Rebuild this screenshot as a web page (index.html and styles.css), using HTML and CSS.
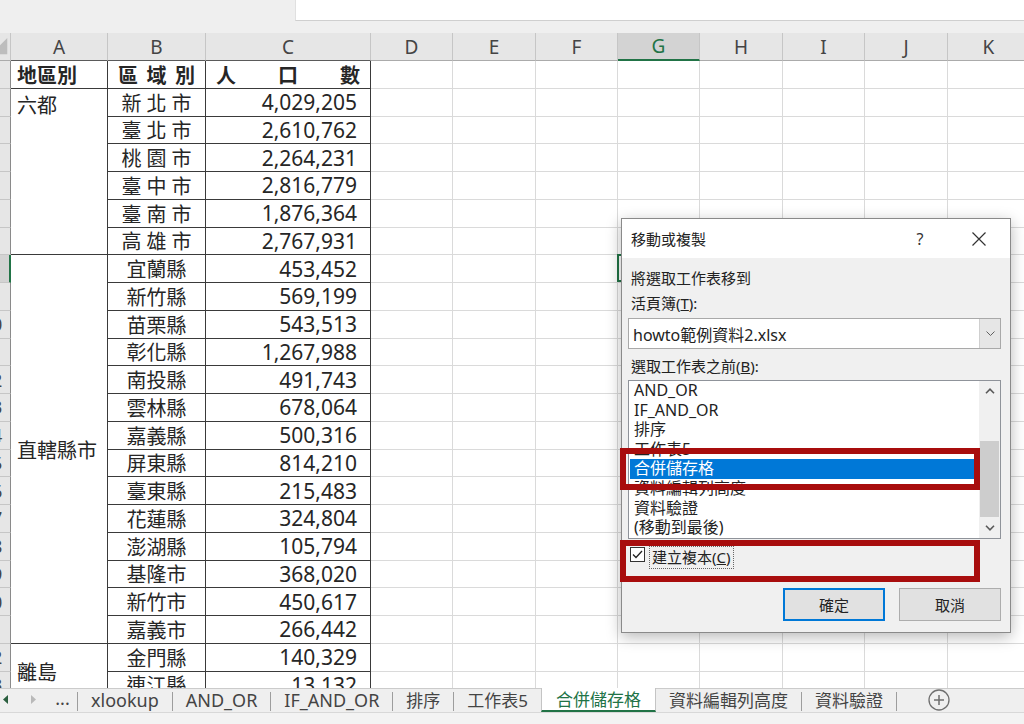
FILE: index.html
```html
<!DOCTYPE html>
<html lang="zh-Hant">
<head>
<meta charset="utf-8">
<title>移動或複製</title>
<link rel="stylesheet" href="styles.css">
</head>
<body>
<div class="app">
  <div class="topbar"><div class="tb-left"></div><div class="tb-right"></div></div>
  <div class="strip"></div>
  <div class="sheet">
    <div class="ch corner"><svg width="11" height="28" viewBox="0 0 11 28"><polygon points="8,4 8,22 -10,22" fill="#bdbdbd"/></svg></div>
    <div class="ch dk">A</div><div class="ch dk">B</div><div class="ch dk">C</div>
    <div class="ch">D</div><div class="ch">E</div><div class="ch">F</div><div class="ch sel">G</div>
    <div class="ch">H</div><div class="ch">I</div><div class="ch">J</div><div class="ch">K</div>

    <div class="rh"><span>1</span></div>
    <div class="t b left">地區別</div>
    <div class="t b dist"><span>區</span><span>域</span><span>別</span></div>
    <div class="t b dist"><span>人</span><span>口</span><span>數</span></div>
    <div></div><div></div><div></div><div></div><div></div><div></div><div></div><div></div>

    <div class="rh"><span>2</span></div>
    <div class="t left top span6">六都</div>
    <div class="t c sp"><span>新北市</span></div><div class="t n">4,029,205</div>
    <div></div><div></div><div></div><div></div><div></div><div></div><div></div><div></div>

    <div class="rh"><span>3</span></div>
    <div class="t c sp"><span>臺北市</span></div><div class="t n">2,610,762</div>
    <div></div><div></div><div></div><div></div><div></div><div></div><div></div><div></div>

    <div class="rh"><span>4</span></div>
    <div class="t c sp"><span>桃園市</span></div><div class="t n">2,264,231</div>
    <div></div><div></div><div></div><div></div><div></div><div></div><div></div><div></div>

    <div class="rh"><span>5</span></div>
    <div class="t c sp"><span>臺中市</span></div><div class="t n">2,816,779</div>
    <div></div><div></div><div></div><div></div><div></div><div></div><div></div><div></div>

    <div class="rh"><span>6</span></div>
    <div class="t c sp"><span>臺南市</span></div><div class="t n">1,876,364</div>
    <div></div><div></div><div></div><div></div><div></div><div></div><div></div><div></div>

    <div class="rh"><span>7</span></div>
    <div class="t c sp"><span>高雄市</span></div><div class="t n">2,767,931</div>
    <div></div><div></div><div></div><div></div><div></div><div></div><div></div><div></div>

    <div class="rh hl"><span>8</span></div>
    <div class="t left span14">直轄縣市</div>
    <div class="t c">宜蘭縣</div><div class="t n">453,452</div>
    <div></div><div></div><div></div><div class="cur"></div><div></div><div></div><div></div><div></div>

    <div class="rh"><span>9</span></div>
    <div class="t c">新竹縣</div><div class="t n">569,199</div>
    <div></div><div></div><div></div><div></div><div></div><div></div><div></div><div></div>

    <div class="rh"><span>10</span></div>
    <div class="t c">苗栗縣</div><div class="t n">543,513</div>
    <div></div><div></div><div></div><div></div><div></div><div></div><div></div><div></div>

    <div class="rh"><span>11</span></div>
    <div class="t c">彰化縣</div><div class="t n">1,267,988</div>
    <div></div><div></div><div></div><div></div><div></div><div></div><div></div><div></div>

    <div class="rh"><span>12</span></div>
    <div class="t c">南投縣</div><div class="t n">491,743</div>
    <div></div><div></div><div></div><div></div><div></div><div></div><div></div><div></div>

    <div class="rh"><span>13</span></div>
    <div class="t c">雲林縣</div><div class="t n">678,064</div>
    <div></div><div></div><div></div><div></div><div></div><div></div><div></div><div></div>

    <div class="rh"><span>14</span></div>
    <div class="t c">嘉義縣</div><div class="t n">500,316</div>
    <div></div><div></div><div></div><div></div><div></div><div></div><div></div><div></div>

    <div class="rh"><span>15</span></div>
    <div class="t c">屏東縣</div><div class="t n">814,210</div>
    <div></div><div></div><div></div><div></div><div></div><div></div><div></div><div></div>

    <div class="rh"><span>16</span></div>
    <div class="t c">臺東縣</div><div class="t n">215,483</div>
    <div></div><div></div><div></div><div></div><div></div><div></div><div></div><div></div>

    <div class="rh"><span>17</span></div>
    <div class="t c">花蓮縣</div><div class="t n">324,804</div>
    <div></div><div></div><div></div><div></div><div></div><div></div><div></div><div></div>

    <div class="rh"><span>18</span></div>
    <div class="t c">澎湖縣</div><div class="t n">105,794</div>
    <div></div><div></div><div></div><div></div><div></div><div></div><div></div><div></div>

    <div class="rh"><span>19</span></div>
    <div class="t c">基隆市</div><div class="t n">368,020</div>
    <div></div><div></div><div></div><div></div><div></div><div></div><div></div><div></div>

    <div class="rh"><span>20</span></div>
    <div class="t c">新竹市</div><div class="t n">450,617</div>
    <div></div><div></div><div></div><div></div><div></div><div></div><div></div><div></div>

    <div class="rh"><span>21</span></div>
    <div class="t c">嘉義市</div><div class="t n">266,442</div>
    <div></div><div></div><div></div><div></div><div></div><div></div><div></div><div></div>

    <div class="rh"><span>22</span></div>
    <div class="t left span2">離島</div>
    <div class="t c">金門縣</div><div class="t n">140,329</div>
    <div></div><div></div><div></div><div></div><div></div><div></div><div></div><div></div>

    <div class="rh"><span>23</span></div>
    <div class="t c">連江縣</div><div class="t n">13,132</div>
    <div></div><div></div><div></div><div></div><div></div><div></div><div></div><div></div>
  </div>

  <div class="tabbar">
    <div class="nav">
      <svg width="48" height="23" viewBox="0 0 48 23"><polygon points="8,6 8,15 3,10.5" fill="#2b5f3f"/><polygon points="31,6 31,15 36,10.5" fill="#b9b9b9"/></svg>
    </div>
    <span class="more">...</span><i class="sep"></i>
    <span class="tab lat">xlookup</span><i class="sep"></i>
    <span class="tab lat">AND_OR</span><i class="sep"></i>
    <span class="tab lat">IF_AND_OR</span><i class="sep"></i>
    <span class="tab">排序</span><i class="sep"></i>
    <span class="tab">工作表5</span>
    <span class="tab active">合併儲存格</span>
    <span class="tab">資料編輯列高度</span><i class="sep"></i>
    <span class="tab">資料驗證</span><i class="sep"></i>
    <span class="add"><svg width="22" height="22" viewBox="0 0 22 22"><circle cx="11" cy="11" r="10" fill="none" stroke="#6f6f6f" stroke-width="1.3"/><path d="M6 11H16M11 6V16" stroke="#6f6f6f" stroke-width="1.5"/></svg></span>
  </div>
  <div class="status"></div>
</div>

<div class="dialog">
  <div class="dlg-title">
    <span class="dlg-name">移動或複製</span>
    <span class="help">?</span>
    <span class="close"><svg width="14" height="14" viewBox="0 0 14 14"><path d="M0.5 0.5L13.5 13.5M13.5 0.5L0.5 13.5" stroke="#333" stroke-width="1.2"/></svg></span>
  </div>
  <div class="dlg-body">
    <div class="lbl">將選取工作表移到</div>
    <div class="lbl gap5">活頁簿(<u>T</u>):</div>
    <div class="combo">
      <span class="combo-text">howto範例資料2.xlsx</span>
      <span class="drop"><svg width="9" height="5" viewBox="0 0 9 5"><polyline points="0.5,0.5 4.5,4.5 8.5,0.5" fill="none" stroke="#606060" stroke-width="1"/></svg></span>
    </div>
    <div class="lbl gap7">選取工作表之前(<u>B</u>):</div>
    <div class="list">
      <div class="items">
        <div class="item">AND_OR</div>
        <div class="item">IF_AND_OR</div>
        <div class="item">排序</div>
        <div class="item">工作表5</div>
        <div class="item selected">合併儲存格</div>
        <div class="item">資料編輯列高度</div>
        <div class="item">資料驗證</div>
        <div class="item">(移動到最後)</div>
      </div>
      <div class="scroll">
        <div class="sbtn"><svg width="10" height="6" viewBox="0 0 10 6"><polyline points="1,5.2 5,1.2 9,5.2" fill="none" stroke="#5a5a5a" stroke-width="1.6"/></svg></div>
        <div class="track"><div class="thumb"></div></div>
        <div class="sbtn"><svg width="10" height="6" viewBox="0 0 10 6"><polyline points="1,0.8 5,4.8 9,0.8" fill="none" stroke="#5a5a5a" stroke-width="1.6"/></svg></div>
      </div>
    </div>
    <div class="check">
      <span class="cbox"><svg width="13" height="13" viewBox="0 0 13 13"><polyline points="2,6.5 5,9.5 11,3" fill="none" stroke="#222" stroke-width="1.3"/></svg></span>
      <span class="focus">建立複本(<u>C</u>)</span>
    </div>
    <div class="buttons">
      <button class="btn primary">確定</button>
      <button class="btn">取消</button>
    </div>
  </div>
  <div class="mark mark1"></div>
  <div class="mark mark2"></div>
</div>
</body>
</html>
```

FILE: styles.css
```css
* { box-sizing: border-box; }
html, body { margin: 0; padding: 0; }
body {
  width: 1024px;
  height: 724px;
  overflow: hidden;
  position: relative;
  background: #fff;
  font-family: "Noto Sans", "Noto Sans CJK TC", sans-serif;
}
.app { display: flex; flex-direction: column; height: 724px; }

/* top formula bar remnant */
.topbar { height: 21px; flex: none; display: flex; }
.tb-left { width: 295px; background: #efefef; }
.tb-right { flex: 1; background: #fff; border-left: 1px solid #e0e0e0; border-bottom: 1px solid #cfcfcf; }
.strip { height: 12px; flex: none; background: #efefef; }

/* sheet grid */
.sheet {
  flex: 1;
  min-height: 0;
  overflow: hidden;
  display: grid;
  grid-template-columns: 11px 97px 98px 165px 82px 83px 82px 82px 83px 82px 83px 82px;
  grid-template-rows: 28px repeat(23, 27.75px);
  align-content: start;
  color: #262626;
  font-size: 20px;
  background: #fff;
}
.sheet > div {
  border-right: 1px solid #dadada;
  border-bottom: 1px solid #dadada;
  display: flex;
  align-items: center;
  min-width: 0;
  white-space: nowrap;
  overflow: hidden;
}
.sheet > .ch {
  background: #e6e6e6;
  border-right: 1px solid #c6c6c6;
  border-bottom: 1px solid #ababab;
  justify-content: center;
  font-size: 19px;
  color: #444;
}
.sheet > .ch.dk { border-bottom-color: #5a5a5a; }
.sheet > .ch.corner { justify-content: flex-start; align-items: flex-start; }
.sheet > .ch.sel {
  background: #d3d3d3;
  color: #217346;
  border-bottom: 2px solid #217346;
}
.sheet > .rh {
  background: #e6e6e6;
  border-right: 1px solid #8a8a8a;
  border-bottom: 1px solid #c6c6c6;
  justify-content: flex-end;
  font-size: 18px;
  color: #444;
}
.rh span { flex: none; width: 36px; text-align: center; }
.sheet > .rh.hl { background: #d3d3d3; border-right: 2px solid #217346; }

.sheet > .t {
  border-right: 1px solid #3a3a3a;
  border-bottom: 1px solid #3a3a3a;
}
.sheet > .b { font-weight: 700; }
.sheet > .left { padding-left: 6px; }
.sheet > .c { justify-content: center; }
.sheet > .sp span { letter-spacing: 5px; margin-right: -5px; }
.sheet > .dist { justify-content: space-between; padding: 0 10px; }
.sheet > .n { justify-content: flex-end; padding-right: 13px; font-size: 21px; }
.sheet > .top { align-items: flex-start; padding-top: 1px; }
.span6 { grid-row: span 6; }
.span14 { grid-row: span 14; }
.span2 { grid-row: span 2; }
.sheet > .cur { position: relative; overflow: visible; }
.cur::after {
  content: "";
  position: absolute;
  left: -1px; top: -1px; right: 0; bottom: 0;
  border: 2px solid #217346;
}

/* sheet tabs */
.tabbar {
  height: 24px;
  flex: none;
  display: flex;
  align-items: stretch;
  background: #efefef;
  border-top: 1px solid #cbcbcb;
  font-size: 17px;
  color: #444;
  white-space: nowrap;
}
.nav { width: 48px; flex: none; display: flex; align-items: center; }
.more { width: 29px; flex: none; text-align: center; line-height: 18px; font-size: 18px; }
.sep { width: 1px; flex: none; background: #9d9d9d; margin: 3px 0 1px; }
.tab { padding: 0 13px 2px; display: flex; align-items: center; flex: none; }
.tab.lat { font-size: 18px; }
.tab.active {
  background: #fff;
  color: #217346;
  padding: 0 14px 1px;
  border-left: 1px solid #c4c4c4;
  border-right: 1px solid #c4c4c4;
  border-bottom: 2px solid #217346;
  margin-top: -1px;
}
.add { margin-left: 31px; display: flex; align-items: center; padding-bottom: 1px; }
.status { height: 12px; flex: none; background: #f3f3f3; border-top: 1px solid #d8d8d8; }

/* dialog */
.dialog {
  position: absolute;
  left: 621px;
  top: 218px;
  width: 390px;
  height: 415px;
  background: #f0f0f0;
  border: 1px solid #8a8a8a;
  box-shadow: 0 4px 14px rgba(0, 0, 0, 0.28);
  display: flex;
  flex-direction: column;
  font-size: 15px;
  color: #222;
  font-family: "Noto Sans", "Noto Sans CJK TC", sans-serif;
}
.dlg-title {
  height: 39px;
  flex: none;
  background: #fff;
  display: flex;
  align-items: center;
  padding-left: 9px;
}
.dlg-name { flex: 1; }
.help { width: 30px; text-align: center; margin-right: 21px; font-size: 16px; color: #333; }
.close { width: 46px; margin-right: 8px; display: flex; justify-content: center; }
.dlg-body {
  flex: 1;
  display: flex;
  flex-direction: column;
  padding: 10px 9px 11px 6px;
}
.lbl { height: 20px; line-height: 20px; margin-left: 3px; }
.gap5 { margin-top: 5px; }
.gap7 { margin-top: 7px; }
.combo {
  margin-top: 5px;
  height: 31px;
  flex: none;
  display: flex;
  align-items: stretch;
  background: #fff;
  border: 1px solid #a9a9a9;
}
.combo-text { flex: 1; padding-left: 4px; font-size: 16px; display: flex; align-items: center; }
.drop {
  width: 21px;
  background: #e6e6e6;
  border-left: 1px solid #cfcfcf;
  display: flex;
  align-items: center;
  justify-content: center;
}
.list {
  margin-top: 4px;
  height: 159px;
  flex: none;
  display: flex;
  background: #fff;
  border: 1px solid #8f939a;
}
.items { flex: 1; padding-left: 1px; }
.item { height: 19.6px; line-height: 19.6px; padding-left: 4px; font-size: 16px; white-space: nowrap; }
.item.selected { background: #0078d7; color: #fff; }
.scroll { width: 21px; flex: none; background: #f0f0f0; display: flex; flex-direction: column; }
.sbtn { height: 20px; display: flex; align-items: center; justify-content: center; }
.track { flex: 1; }
.thumb { margin: 40px 1px 0; height: 76px; background: #cdcdcd; }
.check { margin-top: 7px; height: 24px; flex: none; display: flex; align-items: flex-start; }
.cbox {
  width: 15px;
  height: 15px;
  margin: 1px 0 0 2px;
  border: 1px solid #333;
  background: #fff;
  display: flex;
  align-items: center;
  justify-content: center;
}
.focus { margin-left: 4px; padding: 0 2px; line-height: 21px; border: 1px dotted #666; }
.buttons { margin-top: 18px; display: flex; justify-content: flex-end; gap: 14px; }
.btn {
  width: 102px;
  height: 33px;
  background: #e1e1e1;
  border: 1px solid #adadad;
  font-family: "Noto Sans CJK TC", sans-serif;
  font-size: 15px;
  color: #222;
  padding: 0;
}
.btn.primary { border: 2px solid #0078d7; }
.mark {
  position: absolute;
  left: -2px;
  width: 360px;
  height: 42px;
  border: 6px solid #a80d0d;
}
.mark1 { top: 229px; }
.mark2 { top: 321px; }
```
